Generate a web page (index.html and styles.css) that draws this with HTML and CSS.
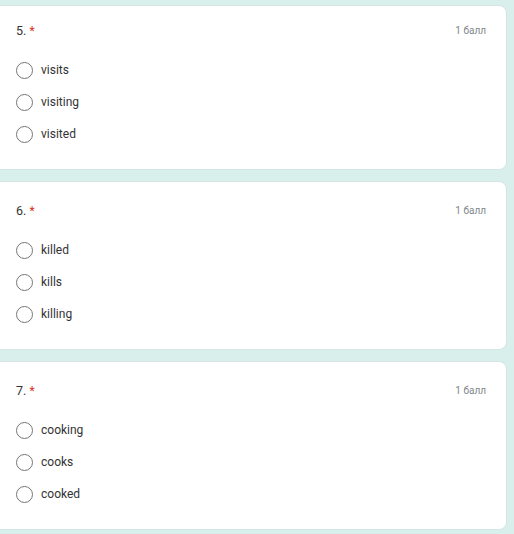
FILE: index.html
```html
<!DOCTYPE html>
<html lang="ru">
<head>
<meta charset="utf-8">
<title>Form</title>
<link rel="stylesheet" href="styles.css">
</head>
<body>
<main class="page">
  <section class="card card-first">
    <div class="head">
      <div class="title">5. <span class="req">*</span></div>
      <div class="points">1 балл</div>
    </div>
    <ul class="options">
      <li class="option"><span class="radio"></span><span class="label">visits</span></li>
      <li class="option"><span class="radio"></span><span class="label">visiting</span></li>
      <li class="option"><span class="radio"></span><span class="label">visited</span></li>
    </ul>
  </section>
  <section class="card">
    <div class="head">
      <div class="title">6. <span class="req">*</span></div>
      <div class="points">1 балл</div>
    </div>
    <ul class="options">
      <li class="option"><span class="radio"></span><span class="label">killed</span></li>
      <li class="option"><span class="radio"></span><span class="label">kills</span></li>
      <li class="option"><span class="radio"></span><span class="label">killing</span></li>
    </ul>
  </section>
  <section class="card">
    <div class="head">
      <div class="title">7. <span class="req">*</span></div>
      <div class="points">1 балл</div>
    </div>
    <ul class="options">
      <li class="option"><span class="radio"></span><span class="label">cooking</span></li>
      <li class="option"><span class="radio"></span><span class="label">cooks</span></li>
      <li class="option"><span class="radio"></span><span class="label">cooked</span></li>
    </ul>
  </section>
</main>
</body>
</html>
```
FILE: styles.css
```css
html, body {
  margin: 0;
  padding: 0;
  background: #d9efec;
  font-family: Roboto, "Noto Sans", Arial, sans-serif;
  color: #333;
  overflow: hidden;
}

.page {
  display: flex;
  flex-direction: column;
  gap: 11px;
  padding-top: 5px;
  width: 507px;
}

.card {
  box-sizing: border-box;
  height: 169px;
  margin-left: -10px;
  padding: 19px 20px 0 25px;
  background: #fff;
  border: 1px solid #d3e6e3;
  border-radius: 8px;
  display: flex;
  flex-direction: column;
}

.card-first {
  height: 165px;
  padding-top: 15px;
}

.head {
  display: flex;
  justify-content: space-between;
  align-items: center;
  height: 18px;
}

.title {
  font-size: 12.5px;
  color: #333;
}

.req {
  color: #d93025;
  font-size: 12px;
}

.points {
  font-size: 10px;
  color: #80868b;
}

.options {
  list-style: none;
  margin: 15px 0 0;
  padding: 0;
}

.option {
  display: flex;
  align-items: center;
  height: 32px;
  gap: 8px;
}

.radio {
  box-sizing: border-box;
  width: 17px;
  height: 17px;
  border: 1.5px solid #767676;
  border-radius: 50%;
  flex: none;
}

.label {
  font-size: 12px;
  color: #333;
}
```
